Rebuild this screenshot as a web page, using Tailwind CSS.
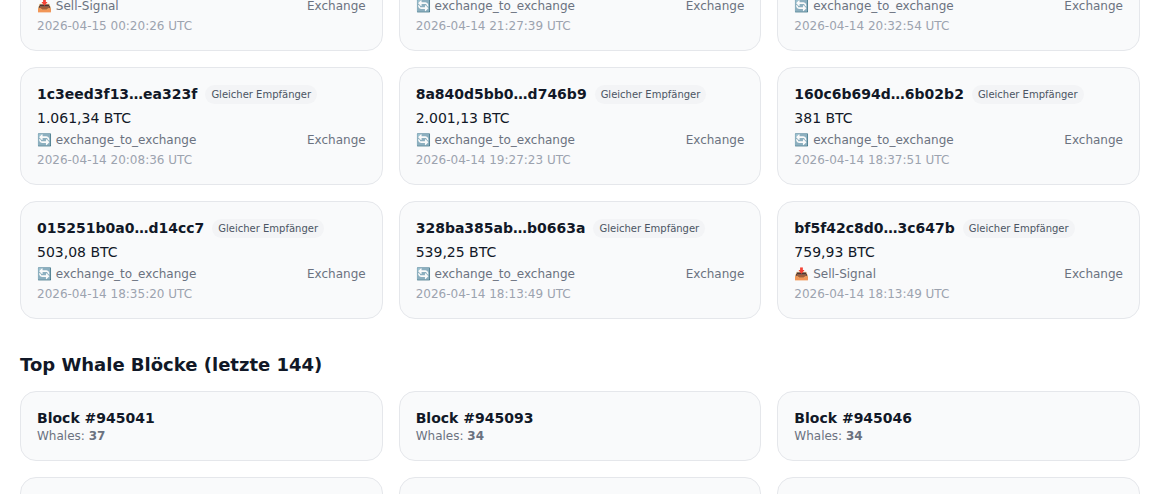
<!DOCTYPE html>
<html lang="en">
<head>
<meta charset="UTF-8">
<title>Whales</title>
<script src="https://cdn.jsdelivr.net/npm/@tailwindcss/browser@4"></script>
</head>
<body class="bg-white h-[494px] overflow-hidden font-['DejaVu_Sans',sans-serif] text-[#111827]">
<div class="px-5 -mt-[67px]">
  <div id="whales" class="grid grid-cols-3 gap-4"></div>
  <h2 class="mt-8 mb-3 text-lg font-bold">Top Whale Blöcke (letzte 144)</h2>
  <div id="blocks" class="grid grid-cols-3 gap-4"></div>
</div>
<script>
  const whales = [
    ['', '', '📥 Sell-Signal', '2026-04-15 00:20:26 UTC'],
    ['', '', '🔄 exchange_to_exchange', '2026-04-14 21:27:39 UTC'],
    ['', '', '🔄 exchange_to_exchange', '2026-04-14 20:32:54 UTC'],
    ['1c3eed3f13…ea323f', '1.061,34 BTC', '🔄 exchange_to_exchange', '2026-04-14 20:08:36 UTC'],
    ['8a840d5bb0…d746b9', '2.001,13 BTC', '🔄 exchange_to_exchange', '2026-04-14 19:27:23 UTC'],
    ['160c6b694d…6b02b2', '381 BTC', '🔄 exchange_to_exchange', '2026-04-14 18:37:51 UTC'],
    ['015251b0a0…d14cc7', '503,08 BTC', '🔄 exchange_to_exchange', '2026-04-14 18:35:20 UTC'],
    ['328ba385ab…b0663a', '539,25 BTC', '🔄 exchange_to_exchange', '2026-04-14 18:13:49 UTC'],
    ['bf5f42c8d0…3c647b', '759,93 BTC', '📥 Sell-Signal', '2026-04-14 18:13:49 UTC']
  ];
  const blocks = [['945041', 37], ['945093', 34], ['945046', 34], null, null, null];

  document.querySelector('#whales').innerHTML = whales.map(w => `
    <div class="rounded-2xl border border-[#e5e7eb] bg-[#f9fafb] p-4">
      <div class="flex items-center gap-2 h-5">
        <span class="text-sm font-bold">${w[0]}</span>
        ${w[0] ? '<span class="rounded-full bg-[#f3f4f6] px-[6px] text-[10px] leading-[19px] text-[#4b5563]">Gleicher Empfänger</span>' : ''}
      </div>
      <div class="mt-1 h-5 text-sm leading-5">${w[1]}</div>
      <div class="mt-1 flex justify-between text-xs leading-4 text-[#6b7280]"><span>${w[2]}</span><span>Exchange</span></div>
      <div class="mt-1 text-xs leading-4 text-[#9ca3af]">${w[3]}</div>
    </div>`).join('');

  document.querySelector('#blocks').innerHTML = blocks.map(b => `
    <div class="h-[70px] rounded-2xl border border-[#e5e7eb] bg-[#f9fafb] p-4">
      ${b ? `<div class="text-sm font-bold leading-5">Block #${b[0]}</div>
      <div class="text-xs leading-4 text-[#6b7280]">Whales: <strong>${b[1]}</strong></div>` : ''}
    </div>`).join('');
</script>
</body>
</html>
